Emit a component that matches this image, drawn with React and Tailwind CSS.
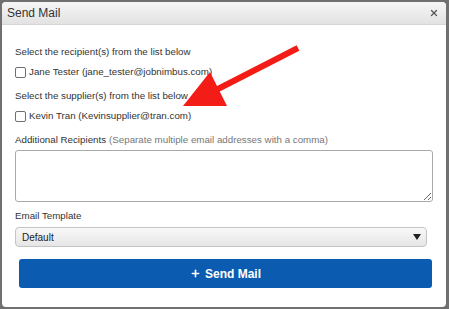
import { Plus, X } from "lucide-react";

function Check({ label }) {
  return (
    <label className="flex items-center gap-[3px] h-[14px] text-[9.75px] text-[#333]">
      <span className="w-[11px] h-[11px] rounded-[2px] border border-[#6f6f6f] bg-white" />
      <span>{label}</span>
    </label>
  );
}

export default function App() {
  return (
    <div
      className="w-[449px] h-[309px] bg-[#707070] pt-[2px] pl-[2px] pr-[3px] pb-[2px] overflow-hidden"
      style={{ fontFamily: '"Liberation Sans", Arial, sans-serif' }}
    >
      <div className="relative w-full h-full bg-white rounded-[4px] overflow-hidden">
        <div className="h-[23px] flex items-center justify-between px-[5px] bg-gradient-to-b from-[#f6f6f6] to-[#e2e2e2] border-b border-[#d4d4d4]">
          <span className="text-[12px] text-[#333]">Send Mail</span>
          <X className="w-[10px] h-[10px] text-[#555] mr-[2px]" strokeWidth={3} />
        </div>

        <div className="pl-[13px] pr-[13px]">
          <div className="mt-[20px] h-[14px] flex items-center text-[9.75px] text-[#333]">
            Select the recipient(s) from the list below
          </div>
          <div className="mt-[6px]">
            <Check label="Jane Tester (jane_tester@jobnimbus.com)" />
          </div>
          <div className="mt-[10px] h-[14px] flex items-center text-[9.75px] text-[#333]">
            Select the supplier(s) from the list below
          </div>
          <div className="mt-[6px]">
            <Check label="Kevin Tran (Kevinsupplier@tran.com)" />
          </div>
          <div className="mt-[10px] h-[14px] flex items-center text-[9.75px] text-[#333]">
            Additional Recipients
            <span className="ml-[3px] text-[#777]">(Separate multiple email addresses with a comma)</span>
          </div>
          <textarea className="block mt-[3px] w-[418px] h-[52px] border border-[#a9a9a9] rounded-[3px] resize-y" />
          <div className="mt-[7px] h-[14px] flex items-center text-[9.75px] text-[#333]">
            Email Template
          </div>
          <div className="mt-[4px] w-[412px] h-[20px] flex items-center justify-between px-[6px] rounded-[4px] border border-[#c4c4c4] bg-gradient-to-b from-[#f8f8f8] to-[#e6e6e6] text-[10px] text-[#222]">
            <span>Default</span>
            <svg width="8" height="6" viewBox="0 0 8 6" className="mr-[-1px]">
              <path d="M0 0 L8 0 L4 6 Z" fill="#222" />
            </svg>
          </div>
          <button className="mt-[12px] ml-[4px] w-[413px] h-[29px] rounded-[3px] bg-[#0b5cb0] text-white font-bold text-[12px] flex items-center justify-center gap-[4px]">
            <Plus className="w-[11px] h-[11px]" strokeWidth={3.5} />
            Send Mail
          </button>
        </div>

        <svg className="absolute left-0 top-0 pointer-events-none" width="444" height="305">
          <line x1="296" y1="46" x2="212" y2="89" stroke="#f41c16" strokeWidth="6" />
          <polygon points="208,70 181,104 225,104" fill="#f41c16" />
        </svg>
      </div>
    </div>
  );
}
